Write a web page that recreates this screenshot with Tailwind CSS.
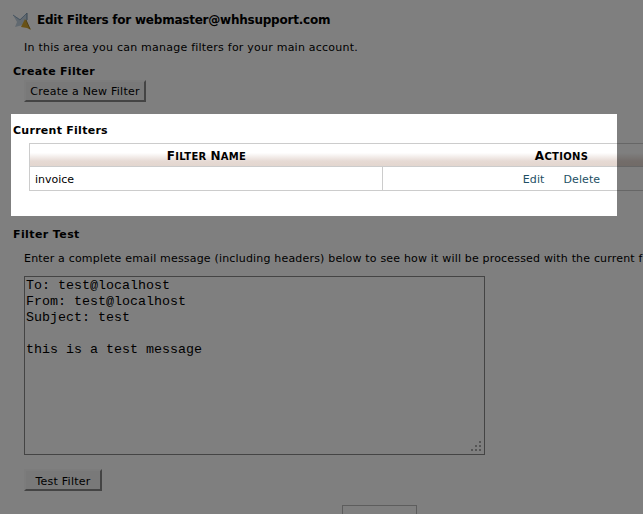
<!DOCTYPE html>
<html lang="en">
<head>
<meta charset="utf-8">
<title>Edit Filters</title>
<script src="https://cdn.jsdelivr.net/npm/@tailwindcss/browser@4"></script>
</head>
<body class="relative h-[514px] w-[643px] overflow-hidden bg-white font-['DejaVu_Sans',Verdana,sans-serif] text-[11px] leading-4 tracking-[0.23px] text-black">
<main class="flex h-[514px] flex-col items-start overflow-hidden whitespace-nowrap pt-[10px]">
  <header class="ml-[13px] flex h-5 shrink-0 items-center gap-[6px]">
    <svg class="mt-[2px] h-[18px] w-[18px]" viewBox="0 0 18 18">
      <path d="M0 3l7 4 7-6v11l-12 3 2-5z" fill="#c3d3e0"/>
      <path d="M0 3l7 5 7-7" fill="none" stroke="#8eabc4"/>
      <path d="M14 1v7" stroke="#6f8ba3"/>
      <path d="M12 7l6 11-4-2-6-1z" fill="#d3a52c"/>
      <path d="M13 8l4 9" stroke="#a07c28"/>
    </svg>
    <h1 class="text-[12px] font-bold tracking-[-0.23px]">Edit Filters for webmaster@whhsupport.com</h1>
  </header>
  <p class="mt-[10px] ml-6 shrink-0">In this area you can manage filters for your main account.</p>
  <h2 class="mt-2 ml-[13px] shrink-0 font-bold tracking-[0.3px]">Create Filter</h2>
  <button class="ml-6 h-[22px] w-[122px] shrink-0 border-2 border-t-[#f8f8f8] border-r-[#888] border-b-[#888] border-l-[#f8f8f8] bg-[#f2f2f2] pt-px leading-[18px]">Create a New Filter</button>
  <h2 class="mt-[21px] ml-[13px] shrink-0 font-bold tracking-[0.27px]">Current Filters</h2>
  <div class="mt-[4px] ml-[29px] grid w-[712px] shrink-0 grid-cols-[353px_1fr] border border-[#ccc]">
    <div class="col-span-2 grid h-[23px] grid-cols-[353px_1fr] border-b border-[#ccc] bg-linear-to-b from-white from-40% via-[#e6dad4] via-78% to-[#e3d6cf] text-center text-[10px] leading-[25px] font-bold tracking-[0.3px] uppercase">
      <div class="h-[22px]"><span class="text-[12px]">F</span>ilter <span class="text-[12px]">N</span>ame</div>
      <div class="h-[22px]"><span class="text-[12px]">A</span>ctions</div>
    </div>
    <div class="h-[23px] border-r border-[#ccc] pl-[5px] leading-[25px] tracking-normal">invoice</div>
    <div class="flex h-[23px] justify-center gap-[19px] leading-[25px] tracking-[0.1px] text-[#1d4f64]"><a>Edit</a><a>Delete</a></div>
  </div>
  <h2 class="mt-[36px] ml-[13px] shrink-0 font-bold tracking-[0.4px]">Filter Test</h2>
  <p class="mt-2 ml-6 shrink-0 tracking-[0.18px]">Enter a complete email message (including headers) below to see how it will be processed with the current f</p>
  <div class="relative mt-[9px] ml-6 h-[179px] w-[461px] shrink-0 border border-[#888] px-[1px] pt-[1px] font-['Liberation_Mono',monospace] text-[13.333px] leading-4 tracking-normal whitespace-pre">To: test@localhost
From: test@localhost
Subject: test

this is a test message<svg class="absolute right-[3px] bottom-[3px] h-[10px] w-[10px]" viewBox="0 0 10 10" fill="#aaa"><path d="M8 0h2v2h-2zM4 4h2v2h-2zM8 4h2v2h-2zM0 8h2v2h-2zM4 8h2v2h-2zM8 8h2v2h-2z"/></svg></div>
  <button class="mt-[14px] ml-6 h-[22px] w-[78px] shrink-0 border-2 border-t-[#f8f8f8] border-r-[#888] border-b-[#888] border-l-[#f8f8f8] bg-[#f2f2f2] pt-[2px] leading-[18px]">Test Filter</button>
  <div class="mt-[14px] ml-[342px] h-[30px] w-[75px] shrink-0 border border-[#bbb]"></div>
</main>
<div class="absolute top-[114px] left-[11px] h-[102px] w-[606px] shadow-[0_0_0_999px_rgb(0_0_0/0.5)]"></div>
</body>
</html>
